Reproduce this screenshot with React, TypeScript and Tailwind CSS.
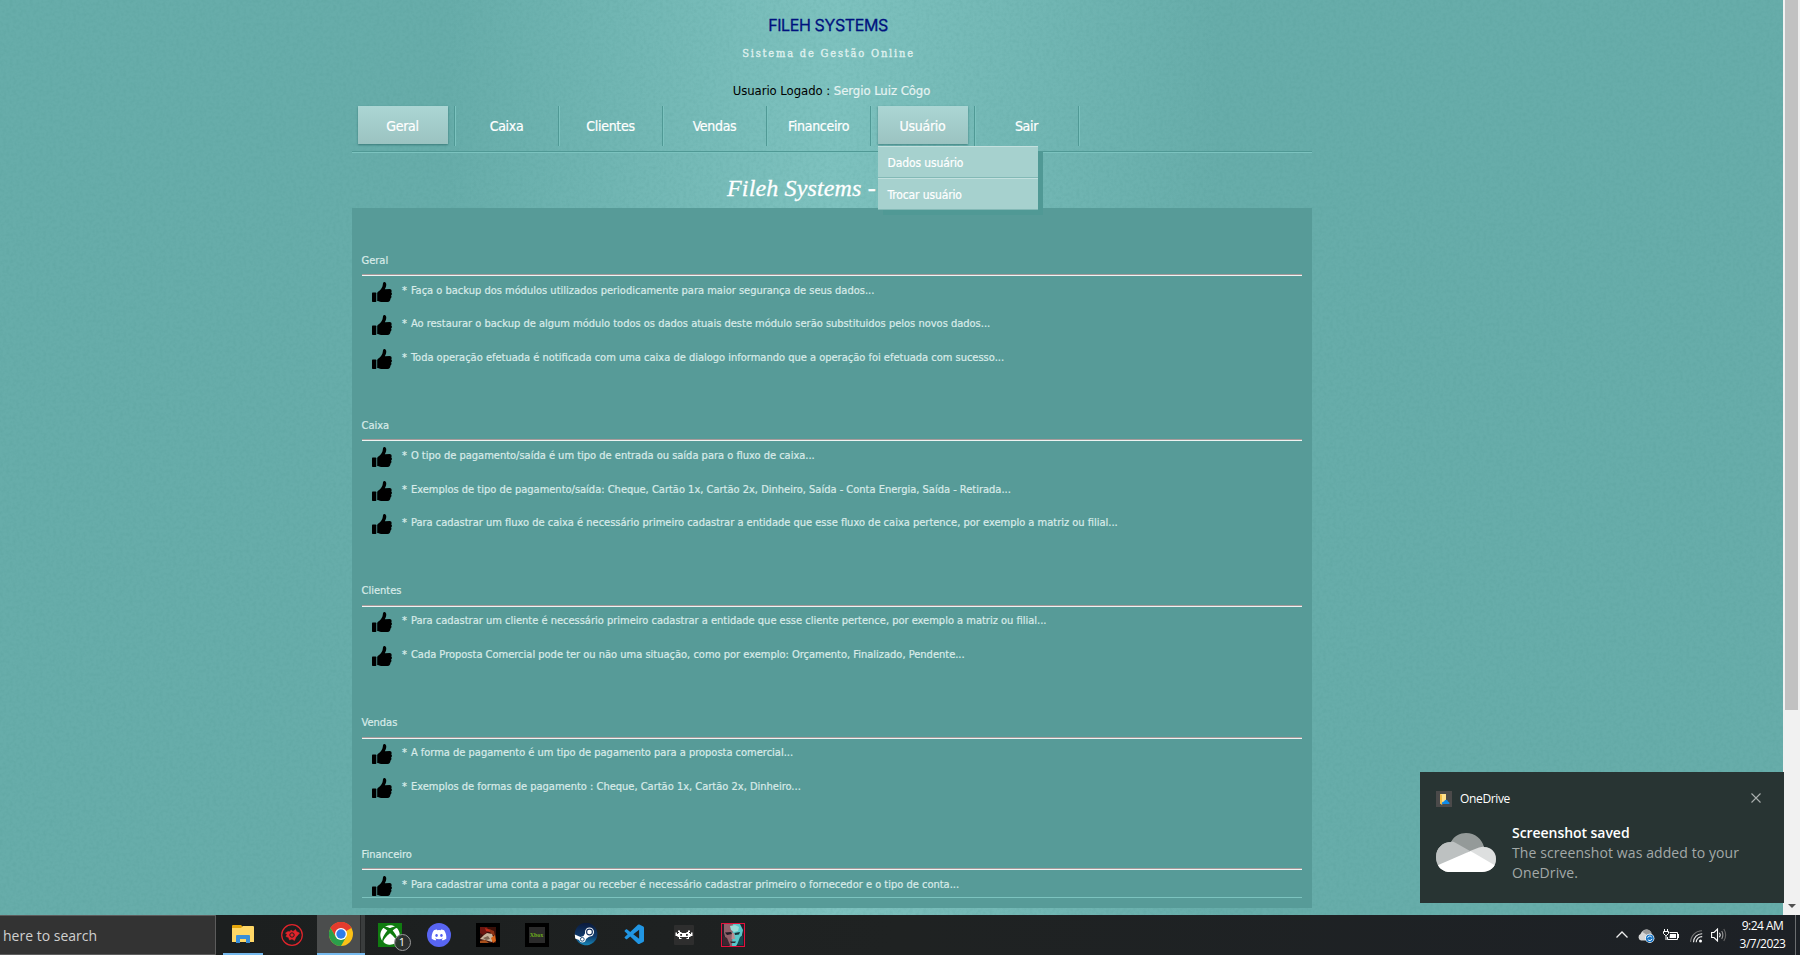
import React from "react";
import { FaXbox, FaDiscord } from "react-icons/fa";
import { VscVscode } from "react-icons/vsc";

const menu = ["Geral", "Caixa", "Clientes", "Vendas", "Financeiro", "Usuário", "Sair"];

const sections = [
  {
    title: "Geral",
    tips: [
      "Faça o backup dos módulos utilizados periodicamente para maior segurança de seus dados...",
      "Ao restaurar o backup de algum módulo todos os dados atuais deste módulo serão substituidos pelos novos dados...",
      "Toda operação efetuada é notificada com uma caixa de dialogo informando que a operação foi efetuada com sucesso...",
    ],
  },
  {
    title: "Caixa",
    tips: [
      "O tipo de pagamento/saída é um tipo de entrada ou saída para o fluxo de caixa...",
      "Exemplos de tipo de pagamento/saída: Cheque, Cartão 1x, Cartão 2x, Dinheiro, Saída - Conta Energia, Saída - Retirada...",
      "Para cadastrar um fluxo de caixa é necessário primeiro cadastrar a entidade que esse fluxo de caixa pertence, por exemplo a matriz ou filial...",
    ],
  },
  {
    title: "Clientes",
    tips: [
      "Para cadastrar um cliente é necessário primeiro cadastrar a entidade que esse cliente pertence, por exemplo a matriz ou filial...",
      "Cada Proposta Comercial pode ter ou não uma situação, como por exemplo: Orçamento, Finalizado, Pendente...",
    ],
  },
  {
    title: "Vendas",
    tips: [
      "A forma de pagamento é um tipo de pagamento para a proposta comercial...",
      "Exemplos de formas de pagamento : Cheque, Cartão 1x, Cartão 2x, Dinheiro...",
    ],
  },
  {
    title: "Financeiro",
    tips: ["Para cadastrar uma conta a pagar ou receber é necessário cadastrar primeiro o fornecedor e o tipo de conta..."],
  },
];

function Texture() {
  return (
    <svg className="absolute inset-0 h-full w-full opacity-50" aria-hidden="true">
      <filter id="grain" colorInterpolationFilters="sRGB">
        <feTurbulence type="fractalNoise" baseFrequency="0.3" numOctaves="2" seed="4" />
        <feColorMatrix type="matrix" values="0 0 0 0 0.25  0 0 0 0 0.53  0 0 0 0 0.51  0.5 0 0 0 -0.2" />
      </filter>
      <rect width="100%" height="100%" filter="url(#grain)" />
    </svg>
  );
}

function ThumbIcon() {
  return (
    <svg viewBox="0 0 20 20" className="mt-[5.500px] size-5 shrink-0" fill="#000">
      <path d="M0.700 10.500H3.600Q4.300 10.500 4.300 11.200V19.300Q4.300 20 3.600 20H0.700Q0 20 0 19.300V11.200Q0 10.500 0.700 10.500Z" />
      <path d="M5.200 11.300Q5.200 10.300 6 9.800C8 8.500 9.600 6.500 10.500 4.200C10.900 3 10.800 1.600 11.200 0.700C11.700 -0.300 13.400 0 14 1.300C14.700 3 13.900 5.200 12.900 7.200L17.700 7.100Q19.600 7.200 19.700 9Q19.600 9.900 19.200 10.300Q20.100 11 19.900 12.200Q19.700 13.200 19 13.600Q19.700 14.500 19.300 15.500Q19 16.300 18.300 16.700Q18.600 18 17.700 18.900Q17 19.800 15.500 20H10.500C8.500 20 7.500 19.200 5.200 18.900Z" />
    </svg>
  );
}

function Dropdown() {
  return (
    <ul className="absolute left-0 top-10 z-10 w-40 bg-[#a6d1ce] text-left text-[12px] tracking-[-0.12px] shadow-[5px_5px_0_#509995]">
      {["Dados usuário", "Trocar usuário"].map((t) => (
        <li key={t} className="h-8 border-b border-t border-b-[#83b9b6] border-t-[#c3e0de] pl-[9.500px] leading-[33px]">
          {t}
        </li>
      ))}
    </ul>
  );
}

function Nav() {
  return (
    <nav className="flex h-[45px] pl-1.5 text-center text-[14px] tracking-[-0.3px] text-white [-webkit-text-stroke:0.2px]">
      {menu.map((m) => {
        const lit = m === "Geral" || m === "Usuário";
        return (
          <div key={m} className="relative flex w-[104px] shrink-0">
            <div
              className={
                lit
                  ? "h-[38px] w-[90px] bg-linear-to-b from-[#abd6d4] to-[#9bc3c1] pr-px leading-[40px] shadow-[0_1px_2px_rgba(20,80,80,0.55)]"
                  : "h-[38px] w-[90px] pr-px leading-[40px]"
              }
            >
              {m}
            </div>
            <div className="ml-1.5 h-10 w-0.5 border-l border-r border-l-[#509995] border-r-[#7cc3bf]" />
            {m === "Usuário" && <Dropdown />}
          </div>
        );
      })}
    </nav>
  );
}

function Panel() {
  return (
    <div className="h-[700px] bg-[#579b98] px-2.5 pt-[42.5px] text-[11px] text-[#d9ebe9] [-webkit-text-stroke:0.2px]">
      {sections.map((s) => (
        <section key={s.title} className="pb-[38.950px]">
          <h2 className="-ml-[0.500px] h-[23.5px] leading-[19px]">{s.title}</h2>
          <div className="h-0.5 border-b border-t border-b-[#eef3f2] border-t-[#a79a9a]" />
          {s.tips.map((t) => (
            <div key={t} className="flex h-[33.67px] pl-2.5">
              <ThumbIcon />
              <span className="ml-2.5 mt-[4.600px] whitespace-nowrap leading-[19px]">
                <span className="mr-[0.800px]">*</span> {t}
              </span>
            </div>
          ))}
        </section>
      ))}
    </div>
  );
}

function Site() {
  return (
    <div className="relative h-[915px] w-[1783px] overflow-hidden bg-[#67adaa]">
      <div className="mx-auto h-full w-[960px] -translate-x-[59.5px] bg-linear-to-r from-[#67adaa] from-10% via-[#7ec2bf] to-[#67adaa] to-90%" />
      <Texture />
      <div className="absolute left-[352px] top-0 w-[960px]">
        <header className="flex h-[106px] flex-col items-center pr-[8px]">
          <h1 className="mt-[13px] h-6 font-['Inter'] text-[16px] leading-6 tracking-[-0.4px] text-[#00127e] [-webkit-text-stroke:0.3px]">FILEH SYSTEMS</h1>
          <p className="mt-[7px] h-5 pl-px font-['DejaVu_Serif'] text-[11px] leading-5 tracking-[1.8px] text-[#dff0ee] [-webkit-text-stroke:0.35px] [font-stretch:condensed]">
            Sistema de Gestão Online
          </p>
          <p className="ml-[7px] mt-[17px] h-5 text-[13px] leading-5 tracking-[-0.06px] text-black">
            Usuario Logado : <span className="text-[#e6f3f2] [-webkit-text-stroke:0.2px]">Sergio Luiz Côgo</span>
          </p>
        </header>
        <Nav />
        <div className="h-0.5 border-b border-t border-b-[#7cc3bf] border-t-[#509995]" />
        <h2 className="h-[55px] pl-[375px] pt-[19px] font-['Liberation_Serif'] text-[24px] italic leading-[32px] tracking-[0.15px] text-white [-webkit-text-stroke:0.3px]">
          Fileh Systems -
        </h2>
        <Panel />
      </div>
      <div className="absolute left-[362px] top-[897px] h-px w-[940px] bg-[#7cc3bf]" />
    </div>
  );
}

function CloudLarge() {
  return (
    <svg viewBox="0 0 60 39" className="h-[39px] w-[60px]">
      <clipPath id="cloud">
        <path d="M12 39C5 38 0 32 0 24C0 15 7 9 15 9C18 3 24 0 30 0C39 0 46 6 48 14C55 14 60 19 60 26C60 34 54 39 46 39Z" />
      </clipPath>
      <g clipPath="url(#cloud)">
        <rect width="60" height="39" fill="#949a99" />
        <path d="M0 0V39L34 18L19 9.500Q16 8 10 8Z" fill="#bdc1c1" />
        <path d="M34 18L43 14.500Q48 13 60 14V36Z" fill="#dddfdf" />
        <path d="M0 33L34.500 18L60 33V39H0Z" fill="#fff" />
      </g>
    </svg>
  );
}

function Toast() {
  return (
    <aside className="absolute left-[1420px] top-[772px] h-[131px] w-[364px] bg-[#283433] px-4 pt-[19px] font-['Open_Sans',sans-serif]">
      <div className="flex h-4 items-center">
        <svg viewBox="0 0 16 16" className="size-4">
          <rect width="16" height="16" fill="#4b4a4a" />
          <path d="M4 3H10V12L5.500 13.500L4 12Z" fill="#ffe08a" />
          <path d="M4 3L6 4V13.500L4 12.500Z" fill="#f3bd45" />
          <path d="M6 13Q5.500 10.500 8 10.500Q9 8 11 9Q12 9.500 12 10.500Q14 11 13.500 13Z" fill="#0f8be8" />
        </svg>
        <span className="ml-2 text-[12px] leading-4 tracking-[-0.35px] text-white">OneDrive</span>
        <svg viewBox="0 0 10 10" className="ml-auto mr-[7px] mt-[-2px] size-[10px]" stroke="#aab0af" strokeWidth="1.100">
          <path d="M0.500 0.500L9.500 9.500M9.500 0.500L0.500 9.500" />
        </svg>
      </div>
      <div className="mt-[15px] flex">
        <div className="mt-[11px]">
          <CloudLarge />
        </div>
        <div className="ml-4 mt-px text-[14px] leading-5">
          <p className="font-semibold tracking-[-0.05px] text-white">Screenshot saved</p>
          <p className="whitespace-nowrap tracking-[0.09px] text-[#a3a9a8]">
            The screenshot was added to your
            <br />
            OneDrive.
          </p>
        </div>
      </div>
    </aside>
  );
}

function FolderIcon() {
  return (
    <svg viewBox="0 0 22 18" className="h-[18px] w-[22px]">
      <path d="M0 1Q0 0 1 0H9L11 2V4H0Z" fill="#e5a50a" />
      <path d="M0 3H9L11 1H21Q22 1 22 2V17H0Z" fill="#ffd766" />
      <path d="M4 18V11Q4 10 5 10H17Q18 10 18 11V18H14V14H8V18Z" fill="#3a8fd9" />
    </svg>
  );
}

function ArmouryIcon() {
  return (
    <svg viewBox="0 0 22 22" className="size-[22px]" fill="none" stroke="#e3242b">
      <circle cx="11" cy="11" r="10.300" strokeWidth="1.200" />
      <path d="M4.500 9L7 7.500L9 7.800L10 6L12 7.500L14.500 5.500L15.500 7.500L18.500 9L16.500 11.500L15 13L13.500 16.500L11 15L8.500 16L7.500 13.500L5 12.500L6 10.500Z" fill="#e3242b" strokeWidth="0.500" />
      <circle cx="11" cy="11" r="2.200" stroke="#1c1f1f" fill="#e3242b" strokeWidth="1" />
    </svg>
  );
}

function ChromeIcon() {
  return (
    <svg viewBox="0 0 24 24" className="size-6">
      <circle cx="12" cy="12" r="12" fill="#fbc116" />
      <path d="M12 12L1.600 6A12 12 0 0 1 22.400 6Z" fill="#e33b2e" />
      <path d="M12 6H22.400A12 12 0 0 0 1.600 6L6.800 15Z" fill="#e33b2e" />
      <path d="M1.600 6A12 12 0 0 0 12 24L17.200 15L12 17.500L6.800 15Z" fill="#2b9f4b" />
      <circle cx="12" cy="12" r="6" fill="#fff" />
      <circle cx="12" cy="12" r="4.700" fill="#2f7de9" />
    </svg>
  );
}

function XboxIcon() {
  return (
    <div className="relative size-6 bg-[#107c10] p-0.5">
      <FaXbox className="size-5 text-white" />
      <span className="absolute left-[16px] top-[11px] flex size-[17px] items-center justify-center rounded-full border border-[#9a9a9a] bg-[#2d3030]/90 text-[11px] text-white">
        1
      </span>
    </div>
  );
}

function GameIcon() {
  return (
    <div className="flex size-6 items-center justify-center bg-black">
      <svg viewBox="0 0 16 16" className="size-4">
        <rect width="16" height="16" fill="#3a1009" />
        <path d="M0 0H7L9 4L3 8L0 6Z" fill="#6e1610" />
        <path d="M5 1L11 3L10 5L6 4Z" fill="#c02a18" />
        <path d="M9 2L14 4L15 9L11 7Z" fill="#8c3013" />
        <path d="M0 12L4 8L7 6L12 7L14 12L12 15L5 13Z" fill="#c9b49c" />
        <path d="M3 11L8 9L10 12L6 13Z" fill="#7d6552" />
        <path d="M11 11L15 8L16 14L13 16Z" fill="#d9641a" />
        <path d="M0 14L5 13L9 16H0Z" fill="#a8501c" />
      </svg>
    </div>
  );
}

function EmulatorIcon() {
  return (
    <div className="flex size-6 items-center justify-center bg-black">
      <div className="flex size-4 items-center justify-center bg-[#2b2b2b] font-['Liberation_Serif'] text-[6px] font-bold leading-none text-[#6fae1c]">Xbox</div>
    </div>
  );
}

function SteamIcon() {
  return (
    <svg viewBox="0 0 24 24" className="size-6">
      <linearGradient id="steam" x1="0" y1="0" x2="0" y2="1">
        <stop offset="0" stopColor="#0b1a3c" />
        <stop offset="0.600" stopColor="#0f3a6b" />
        <stop offset="1" stopColor="#1787b8" />
      </linearGradient>
      <path d="M0.800 10.500A11.300 11.300 0 1 1 1.500 15Z" fill="url(#steam)" />
      <path d="M0.800 11.500L6.500 14L9.500 13L11.500 9.500L16 13L12 16Q11.500 19.500 8.200 19.500Q5.800 19.300 5 17L1.200 15.500Z" fill="#fff" />
      <circle cx="15.500" cy="9" r="4.500" fill="#fff" />
      <circle cx="15.500" cy="9" r="2.900" fill="none" stroke="#12305e" strokeWidth="1.100" />
      <circle cx="8.300" cy="16.300" r="1.900" fill="none" stroke="#12406e" strokeWidth="0.900" />
    </svg>
  );
}

function RetroIcon() {
  return (
    <svg viewBox="0 0 20 20" className="size-5">
      <rect width="20" height="20" rx="1" fill="#2e2e2e" />
      <path d="M4 5.500H6V7H7.500V8H12.500V7H14V5.500H16V7H15V8H16V9H17V7.500H18.500V11H16.500V12H15V14H12.500V13H14V12H6V13H7.500V14H5V12H3.500V11H1.500V7.500H3V9H4V8H5V7H4Z" fill="#fff" />
      <rect x="6.200" y="9" width="1.800" height="1.800" fill="#2e2e2e" />
      <rect x="12" y="9" width="1.800" height="1.800" fill="#2e2e2e" />
    </svg>
  );
}

function FaceIcon() {
  return (
    <svg viewBox="0 0 24 24" className="size-6">
      <rect width="24" height="24" fill="#25222c" />
      <path d="M3 1H12V23H9L5 17L3 10Z" fill="#91606a" />
      <path d="M12 1H19L22 7L20 17L15 23H11Z" fill="#58c8c9" />
      <path d="M9 3L14 2L18 4L17 8L13 9L10 7Z" fill="#9bdcd8" />
      <path d="M4 9.500L10 9L11 11L6 12Z" fill="#231b25" />
      <path d="M13.500 10L19 9L18 11.500L14 12Z" fill="#17343a" />
      <path d="M11 10L13 10L14 16L10.500 16Z" fill="#b98d90" />
      <path d="M9 18.500H15L14 20H10Z" fill="#2c2830" />
      <path d="M2 13L6 15L9 22H2Z" fill="#3c2730" />
      <path d="M19 14L22 12V22H16Z" fill="#164a50" />
      <rect x="0.500" y="0.500" width="23" height="23" fill="none" stroke="#e5103c" />
    </svg>
  );
}

function Cell({ children }: { children: React.ReactNode }) {
  return <div className="flex h-10 w-[49px] shrink-0 items-center justify-center">{children}</div>;
}

function Tray() {
  return (
    <div className="ml-auto flex h-10 items-center">
      <svg viewBox="0 0 12 7" className="mb-px mr-[10px] h-[7px] w-3" fill="none" stroke="#eee" strokeWidth="1.300">
        <path d="M0.500 6.500L6 1L11.500 6.500" />
      </svg>
      <svg viewBox="0 0 17 14" className="mr-2 mt-0.5 h-[14px] w-[17px]">
        <path d="M3 11.500A3.500 3.500 0 0 1 2.500 5Q4.500 0.500 8.500 0.500Q12 0.500 13.500 4V11.500Z" fill="#d6d6d6" />
        <path d="M4.500 3Q6 0.500 8.500 0.500Q12 0.500 13.500 4L9 6Z" fill="#9a9a9a" />
        <circle cx="11.800" cy="9.300" r="4.600" fill="#fff" />
        <circle cx="11.800" cy="9.300" r="3.900" fill="#1573c4" />
        <path d="M9.600 8.800A2.300 2.300 0 0 1 13.800 8.200M14 9.800A2.300 2.300 0 0 1 9.800 10.400" stroke="#fff" fill="none" />
      </svg>
      <svg viewBox="0 0 16 12" className="mr-[11px] h-3 w-4" fill="none" stroke="#fff">
        <path d="M1.500 0V2.500M4.500 0V2.500M0.500 2.500H5.500V4.500L3.500 6.500H2.500L0.500 4.500ZM3 6.500V11" />
        <path d="M6.500 3.500H14.500V10.500H4.500V8" />
        <path d="M7 5H13V9H6.500Z" fill="#fff" stroke="none" />
        <path d="M15.500 5V9" />
      </svg>
      <svg viewBox="0 0 13 13" className="mr-[8px] mt-0.5 h-[13px] w-[13px]" fill="none" strokeWidth="1.100">
        <path d="M0.600 12A11.500 11.500 0 0 1 12 0.700" stroke="#777" />
        <path d="M3.500 12.300A8.600 8.600 0 0 1 12.200 3.700" stroke="#eee" />
        <path d="M6.200 12.300A5.900 5.900 0 0 1 12.200 6.600" stroke="#eee" />
        <circle cx="10.500" cy="11" r="1.500" fill="#fff" />
      </svg>
      <svg viewBox="0 0 16 14" className="mr-[12px] h-[14px] w-4" fill="none" stroke="#fff" strokeWidth="1.100">
        <path d="M0.600 4.500H3L6.500 1V13L3 9.500H0.600Z" />
        <path d="M8.500 4.800Q10 7 8.500 9.200" />
        <path d="M10.700 3Q13 7 10.700 11" stroke="#999" />
        <path d="M12.800 1Q16.500 7 12.800 13" stroke="#666" />
      </svg>
      <div className="mr-[9px] w-[47px] whitespace-nowrap text-center text-[12px] leading-[18px] tracking-[-0.5px] text-white">
        <p>9:24 AM</p>
        <p>3/7/2023</p>
      </div>
      <div className="h-10 w-[5px] border-l border-[#6b6e70]" />
    </div>
  );
}

function Taskbar() {
  return (
    <footer className="flex h-10 w-full bg-linear-to-r from-[#1b1e1e] via-[#1f2222] to-[#1d2126] font-['Open_Sans',sans-serif]">
      <div className="h-10 w-[216px] border-b border-r border-t border-[#5c5c5c] bg-[#333] pl-[3px] text-[14px] leading-[39px] text-[#d0d0d0]">
        here to search
      </div>
      <div className="ml-[7px] flex h-10 w-10 items-center justify-center border-b-2 border-[#76b9ed]">
        <FolderIcon />
      </div>
      <div className="ml-[5px] flex h-10 w-[49px] items-center justify-center pr-0.5">
        <ArmouryIcon />
      </div>
      <div className="flex h-10 w-12 border-b-2 border-[#76b9ed] bg-[#3a3d3d]">
        <div className="flex w-11 items-center justify-center border-r border-[#262828] bg-[#4b4d4d] pl-1">
          <ChromeIcon />
        </div>
      </div>
      <div className="flex h-10">
        <Cell><XboxIcon /></Cell>
        <Cell>
          <div className="flex size-6 items-center justify-center rounded-full bg-[#5865f2]">
            <FaDiscord className="size-4 text-white" />
          </div>
        </Cell>
        <Cell><GameIcon /></Cell>
        <Cell><EmulatorIcon /></Cell>
        <Cell><SteamIcon /></Cell>
        <Cell><VscVscode className="size-6 text-[#2196e3]" /></Cell>
        <Cell><RetroIcon /></Cell>
        <Cell><FaceIcon /></Cell>
      </div>
      <Tray />
    </footer>
  );
}

export default function App() {
  return (
    <div className="relative h-[955px] w-[1800px] overflow-hidden font-['DejaVu_Sans_Condensed','DejaVu_Sans',sans-serif]">
      <div className="flex h-[915px]">
        <Site />
        <div className="flex w-[17px] flex-col items-center bg-[#f1f1f1]">
          <div className="h-[710px] w-[13px] bg-[#c1c1c1]" />
          <div className="mb-[7px] mt-auto h-0 w-0 border-x-4 border-t-4 border-x-transparent border-t-[#505050]" />
        </div>
      </div>
      <Taskbar />
      <Toast />
    </div>
  );
}
